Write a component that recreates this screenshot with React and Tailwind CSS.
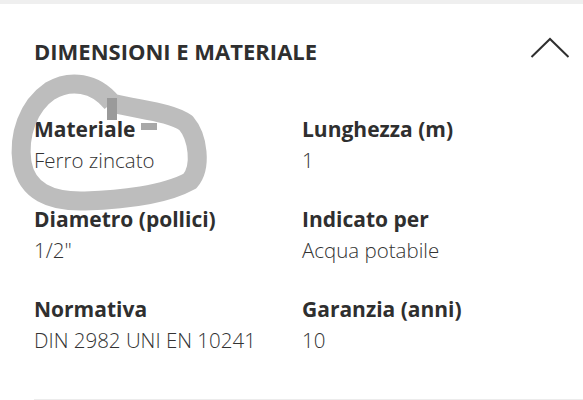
import React from "react";

const specs = [
  { label: "Materiale", value: "Ferro zincato" },
  { label: "Lunghezza (m)", value: "1" },
  { label: "Diametro (pollici)", value: '1/2"' },
  { label: "Indicato per", value: "Acqua potabile" },
  { label: "Normativa", value: "DIN 2982 UNI EN 10241" },
  { label: "Garanzia (anni)", value: "10" },
];

function App() {
  return (
    <div className="relative w-[583px] h-[400px] overflow-hidden bg-white text-[#2f2f2f]" style={{ fontFamily: '"Open Sans", "Liberation Sans", sans-serif' }}>
      <div className="h-[4px] bg-[#efefef]" />

      <div className="pl-[34px] pr-[13px] pt-[33px]">
        <div className="flex items-center justify-between h-[28px]">
          <h2 className="text-[22px] leading-[28px] font-bold uppercase">Dimensioni e materiale</h2>
          <svg width="40" height="22" viewBox="0 0 40 22" className="mt-[-6px]">
            <path d="M1.5 20 L20 2 L38.5 20" fill="none" stroke="#2f2f2f" strokeWidth="2" />
          </svg>
        </div>

        <div className="grid grid-cols-[268px_1fr] gap-y-[28px] mt-[49px]">
          {specs.map((s) => (
            <div key={s.label} className="flex flex-col">
              <span className="text-[21px] leading-[31px] font-bold">{s.label}</span>
              <span className="text-[20.5px] leading-[31px] font-light text-[#333333]">{s.value}</span>
            </div>
          ))}
        </div>
      </div>

      <div className="absolute left-[34px] right-0 bottom-0 h-[1px] bg-[#ececec]" />

      {/* hand-drawn marker circle */}
      <svg className="absolute inset-0 pointer-events-none" width="583" height="400" viewBox="0 0 583 400">
        <path
          d="M112 103 C95 82, 70 79, 50 91 C28 106, 18 135, 22 163 C27 191, 50 202, 85 201 C120 200, 165 195, 190 181 C202 167, 198 137, 186 123 C171 112, 140 110, 112 103"
          fill="none"
          stroke="#bdbdbd"
          strokeWidth="19"
          strokeLinecap="butt"
        />
        <rect x="107" y="98" width="10" height="22" fill="#9a9a9a" />
        <rect x="141" y="123" width="16" height="7" fill="#a8a8a8" />
      </svg>
    </div>
  );
}

export default App;
